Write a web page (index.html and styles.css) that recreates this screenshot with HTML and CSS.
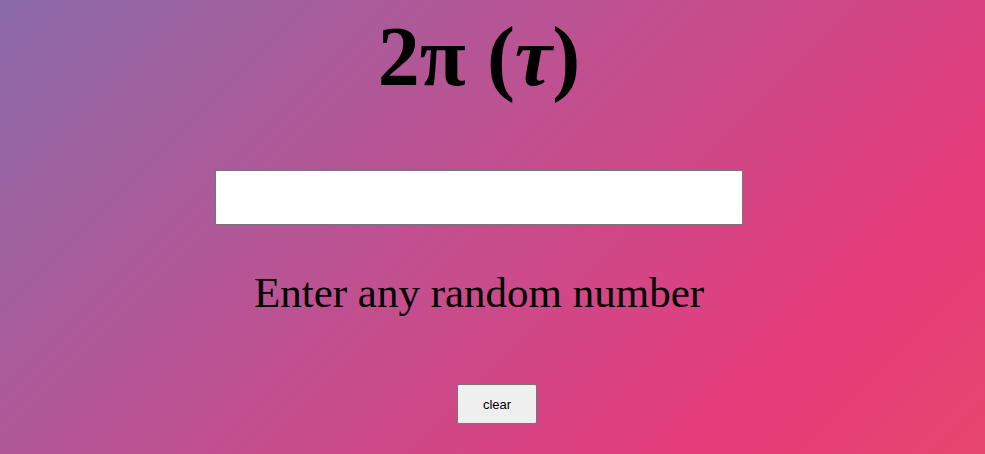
FILE: index.html
```html
<!DOCTYPE html>
<html>
<head>
<meta charset="utf-8">
<link rel="stylesheet" href="styles.css">
</head>
<body class="page">
  <main class="wrap">
    <h1 class="title">2π (<i class="tau">τ</i>)</h1>
    <input class="field" type="text">
    <p class="hint">Enter any random number</p>
    <button class="btn">clear</button>
  </main>
</body>
</html>
```

FILE: styles.css
```css
html, body {
  margin: 0;
  padding: 0;
  height: 100%;
}
.page {
  background: linear-gradient(135deg, #8a6aa8 0%, #c05090 45%, #e63c7a 80%, #e6466e 100%);
  font-family: "Liberation Serif", "Times New Roman", serif;
  overflow: hidden;
}
.wrap {
  display: flex;
  flex-direction: column;
  align-items: center;
  padding-right: 27px;
}
.title {
  margin: 9px 0 0 0;
  font-size: 84px;
  font-weight: bold;
  line-height: 96px;
  color: #000;
}
.tau {
  font-style: italic;
  font-weight: bold;
}
.field {
  margin-top: 65px;
  width: 528px;
  height: 55px;
  box-sizing: border-box;
  border: 1px solid #767676;
  background: #fff;
  padding: 0;
}
.hint {
  margin: 42px 0 0 0;
  font-size: 43px;
  line-height: 52px;
  color: #000;
}
.btn {
  margin-top: 65px;
  margin-left: 36px;
  width: 80px;
  height: 40px;
  box-sizing: border-box;
  border: 1px solid #767676;
  border-radius: 2px;
  background: #efefef;
  font-family: "Liberation Sans", Arial, sans-serif;
  font-size: 13px;
  color: #000;
}
```
